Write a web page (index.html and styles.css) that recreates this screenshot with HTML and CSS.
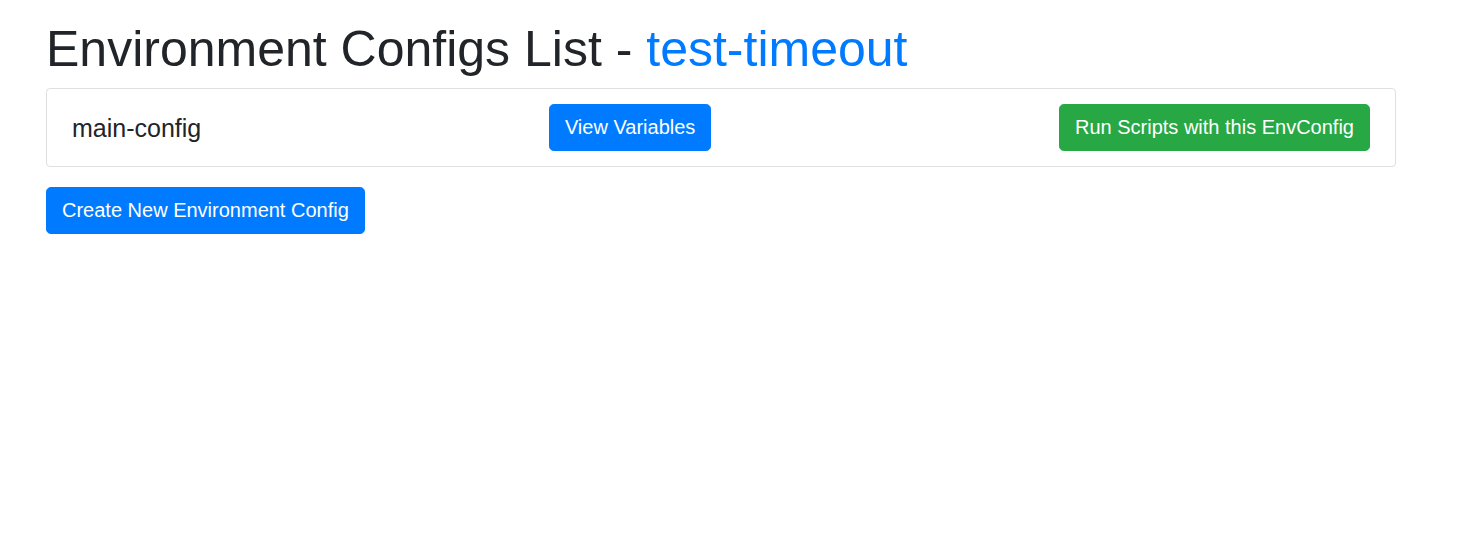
FILE: index.html
```html
<!DOCTYPE html>
<html lang="en">
<head>
<meta charset="utf-8">
<title>Environment Configs List - test-timeout</title>
<link rel="stylesheet" href="styles.css">
</head>
<body>
<main class="container">
  <h1 class="page-title">Environment Configs List - <a class="title-link" href="#">test-timeout</a></h1>
  <div class="config-card">
    <span class="config-name">main-config</span>
    <a class="btn btn-primary" href="#">View Variables</a>
    <a class="btn btn-success" href="#">Run Scripts with this EnvConfig</a>
  </div>
  <div class="actions">
    <a class="btn btn-primary" href="#">Create New Environment Config</a>
  </div>
</main>
</body>
</html>
```
FILE: styles.css
```css
* { box-sizing: border-box; }
html, body { margin: 0; padding: 0; background: #fff; }
body {
  font-family: "Liberation Sans", Arial, sans-serif;
  color: #212529;
}
.container {
  width: 1350px;
  margin-left: 46px;
  padding-top: 19px;
}
.page-title {
  font-size: 50px;
  font-weight: 400;
  line-height: 1.2;
  margin: 0 0 9px 0;
}
.title-link {
  color: #007bff;
  text-decoration: none;
}
.config-card {
  display: flex;
  align-items: center;
  justify-content: space-between;
  border: 1px solid rgba(0, 0, 0, 0.125);
  border-radius: 4px;
  padding: 15px 25px 15px 25px;
}
.config-name {
  font-size: 25px;
  line-height: 1.2;
}
.btn {
  display: inline-block;
  font-size: 20px;
  line-height: 29px;
  padding: 8px 15px;
  border: 1px solid transparent;
  border-radius: 4.8px;
  text-decoration: none;
  color: #fff;
  white-space: nowrap;
}
.btn-primary { background: #007bff; border-color: #007bff; }
.btn-success { background: #28a745; border-color: #28a745; }
.actions {
  margin-top: 20px;
}
```
